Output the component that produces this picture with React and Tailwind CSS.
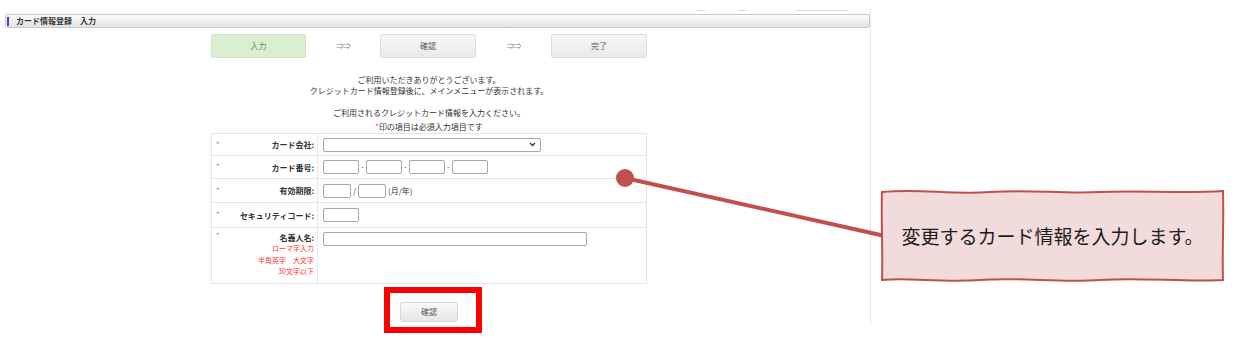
const FONT = "font-['Noto_Sans_CJK_JP','Noto_Sans',sans-serif]";

function Row({ h, label, children, last }) {
  return (
    <div className={`flex ${h} ${last ? "" : "border-b border-[#e6e6e6]"}`}>
      <div className="w-[106px] shrink-0 border-r border-[#e6e6e6] flex items-center pl-[4px] pr-[3px]">
        <span className="text-[#f55] text-[8px] leading-none">*</span>
        <span className="ml-auto font-bold text-[8px] leading-[11px] text-[#333]">{label}</span>
      </div>
      <div className="flex-1 flex items-center pl-[5px]">{children}</div>
    </div>
  );
}

function Box({ w }) {
  return <div className={`${w} h-[14px] border border-[#a6a6a6] rounded-[2px] bg-white shrink-0`} />;
}

function Sep({ c }) {
  return <span className="text-[8px] text-[#666] w-[7px] text-center leading-none">{c}</span>;
}

export default function App() {
  return (
    <div className={`relative w-[1240px] h-[357px] bg-white overflow-hidden ${FONT} text-[#333]`}>
      <div className="mt-[10px] w-[871px] h-[315px] border-r border-[#e9e9e9] pl-[5px]">
        {/* cut-off items at top */}
        <div className="flex h-[1px]">
          <div className="ml-[692px] w-[8px] h-[1px] bg-[#d8d8d8]" />
          <div className="ml-[33px] w-[8px] h-[1px] bg-[#d8d8d8]" />
          <div className="ml-[49px] w-[53px] h-[1px] bg-[#e0e0e0]" />
        </div>
        {/* title bar */}
        <div className="mt-[3px] h-[14px] border border-[#c9c9c9] rounded-[2px] bg-gradient-to-b from-[#fbfbfb] to-[#e3e3e3] flex items-center pl-[1px]">
          <div className="w-[2px] h-[9px] bg-[#3b49c9]" />
          <span className="ml-[7px] text-[8px] font-bold leading-none text-[#333]">カード情報登録　入力</span>
        </div>

        <div className="ml-[206px] w-[436px]">
          {/* steps */}
          <div className="mt-[6px] flex items-center h-[24px]">
            <div className="w-[95px] h-[24px] rounded-[2px] bg-[#d9efcf] border border-[#cfe5c4] flex items-center justify-center text-[8px] text-[#6b8f5c]">入力</div>
            <div className="w-[74px] text-center text-[8px] text-[#8a8a8a] tracking-[-1px]">⇒⇒</div>
            <div className="w-[96px] h-[24px] rounded-[2px] bg-gradient-to-b from-[#f7f7f7] to-[#e9e9e9] border border-[#dcdcdc] flex items-center justify-center text-[8px] text-[#555]">確認</div>
            <div className="w-[75px] text-center text-[8px] text-[#8a8a8a] tracking-[-1px]">⇒⇒</div>
            <div className="w-[96px] h-[24px] rounded-[2px] bg-gradient-to-b from-[#f7f7f7] to-[#e9e9e9] border border-[#dcdcdc] flex items-center justify-center text-[8px] text-[#555]">完了</div>
          </div>

          {/* messages */}
          <div className="mt-[16px] text-center text-[8px] leading-[11px] text-[#333]">
            <p>ご利用いただきありがとうございます。</p>
            <p>クレジットカード情報登録後に、メインメニューが表示されます。</p>
            <p className="h-[11px]"></p>
            <p>ご利用されるクレジットカード情報を入力ください。</p>
            <p className="mt-[3px]"><span className="text-[#f44]">*</span>印の項目は必須入力項目です</p>
          </div>

          {/* form table */}
          <div className="mt-[1px] border border-[#e6e6e6]">
            <Row h="h-[22px]" label="カード会社:">
              <div className="w-[218px] h-[14px] border border-[#a6a6a6] rounded-[2px] bg-white flex items-center justify-end pr-[4px]">
                <svg width="7" height="5" viewBox="0 0 7 5"><path d="M1 1 L3.5 3.5 L6 1" fill="none" stroke="#333" strokeWidth="1.3" /></svg>
              </div>
            </Row>
            <Row h="h-[23px]" label="カード番号:">
              <Box w="w-[36px]" /><Sep c="-" /><Box w="w-[36px]" /><Sep c="-" /><Box w="w-[36px]" /><Sep c="-" /><Box w="w-[36px]" />
            </Row>
            <Row h="h-[24px]" label="有効期限:">
              <Box w="w-[28px]" /><Sep c="/" /><Box w="w-[28px]" />
              <span className="ml-[2px] text-[8px] text-[#333]">(月/年)</span>
            </Row>
            <Row h="h-[25px]" label="セキュリティコード:">
              <Box w="w-[36px]" />
            </Row>
            <div className="flex h-[55px]">
              <div className="w-[106px] shrink-0 border-r border-[#e6e6e6] flex flex-col pl-[4px] pr-[3px] pt-[4px]">
                <div className="flex items-start">
                  <span className="text-[#f55] text-[8px] leading-[8px]">*</span>
                  <span className="ml-auto font-bold text-[8px] leading-[11px] text-[#333]">名義人名:</span>
                </div>
                <div className="text-right text-[7px] leading-[11.5px] text-[#f33]">
                  <p>ローマ字入力</p>
                  <p>半角英字　大文字</p>
                  <p>30文字以下</p>
                </div>
              </div>
              <div className="flex-1 pl-[5px] pt-[4px]">
                <div className="w-[264px] h-[14px] border border-[#a6a6a6] rounded-[2px] bg-white" />
              </div>
            </div>
          </div>

          {/* submit */}
          <div className="mt-[18px] flex justify-center">
            <div className="w-[58px] h-[20px] rounded-[3px] border border-[#d6d6d6] bg-gradient-to-b from-[#fafafa] to-[#e6e6e6] flex items-center justify-center text-[8px] text-[#555]">確認</div>
          </div>
        </div>
      </div>

      {/* annotations */}
      <div className="absolute left-[384px] top-[287px] w-[98px] h-[46px] border-[6px] border-[#ff0000]" />
      <svg className="absolute left-0 top-0 pointer-events-none" width="1240" height="357" viewBox="0 0 1240 357">
        <line x1="625" y1="178" x2="885" y2="236" stroke="#c0504d" strokeWidth="4" />
        <circle cx="625" cy="178" r="9" fill="#c0504d" />
        <path
          d="M882,192 C920,188 950,195 990,192 C1030,189 1060,194 1100,192 C1140,190 1180,194 1223,191 C1224,220 1222,250 1223,280 C1180,282 1140,277 1100,280 C1060,283 1020,277 980,280 C940,283 910,277 882,280 C883,250 881,220 882,192 Z"
          fill="#f2dcdb"
          stroke="#c0504d"
          strokeWidth="2"
        />
      </svg>
      <div className="absolute left-[882px] top-[191px] w-[341px] h-[89px] flex items-center justify-center text-[19px] text-[#1a1a1a] leading-none">
        変更するカード情報を入力します。
      </div>
    </div>
  );
}
